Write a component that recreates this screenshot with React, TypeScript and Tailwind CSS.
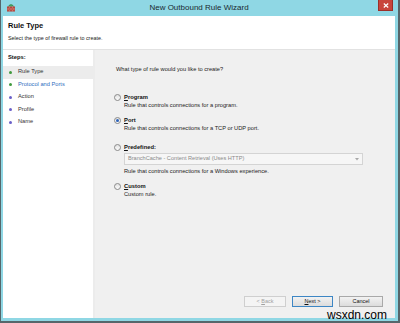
const font = { fontFamily: '"Liberation Sans", Arial, sans-serif' };

function Radio({ checked }: { checked?: boolean }) {
  return (
    <div className="w-[7px] h-[7px] rounded-full border border-[#8a8a8a] bg-gradient-to-b from-[#e2e2e2] to-[#fbfbfb] flex items-center justify-center shrink-0">
      {checked && <div className="w-[3px] h-[3px] rounded-full bg-[#2c62b8]" />}
    </div>
  );
}

function Option({
  label,
  desc,
  checked,
  className,
  children,
}: {
  label: React.ReactNode;
  desc: string;
  checked?: boolean;
  className?: string;
  children?: React.ReactNode;
}) {
  return (
    <div className={`flex gap-[3px] ${className ?? ''}`}>
      <div className="h-[8px] flex items-center">
        <Radio checked={checked} />
      </div>
      <div className="flex flex-col">
        <div className="h-[8px] leading-[8px] text-[5.8px] font-bold text-[#111]">{label}</div>
        {children}
        <div className="h-[8px] leading-[8px] text-[5.7px] text-[#222]">{desc}</div>
      </div>
    </div>
  );
}

const steps = [
  { name: 'Rule Type', done: true, active: true },
  { name: 'Protocol and Ports', done: true, link: true },
  { name: 'Action' },
  { name: 'Profile' },
  { name: 'Name' },
];

export default function App() {
  return (
    <div
      className="relative w-[400px] h-[323px] overflow-hidden bg-[#8fd7e4] border-l border-r-2 border-b-2 border-[#56666b] pl-[2px] pr-[3px] pb-[3px] flex flex-col"
      style={font}
    >
      {/* title bar */}
      <div className="relative h-[16px] shrink-0 flex items-center justify-center">
        <svg className="absolute left-[3px] top-[2px]" width="10" height="10" viewBox="0 0 10 10">
          <path d="M2.5 4.5 A2.6 2.6 0 0 1 7.5 4.5" fill="#49a860" stroke="#2d7a40" strokeWidth="0.6" />
          <rect x="1" y="4.5" width="8" height="5" fill="#b03a32" />
          <path d="M1 6.2 H9 M1 7.9 H9 M3.5 4.5 V6.2 M6.5 4.5 V6.2 M2.2 6.2 V7.9 M5 6.2 V7.9 M7.8 6.2 V7.9 M3.5 7.9 V9.5 M6.5 7.9 V9.5" stroke="#e9a79a" strokeWidth="0.4" />
        </svg>
        <span className="text-[8px] text-[#1a2a30] leading-none">New Outbound Rule Wizard</span>
        <div className="absolute right-[2px] top-0 w-[15px] h-[11px] bg-[#c8453c] border border-[#9c2f28] border-t-0 flex items-center justify-center">
          <svg width="6" height="5" viewBox="0 0 6 5">
            <path d="M0.8 0.5 L5.2 4.5 M5.2 0.5 L0.8 4.5" stroke="#ffffff" strokeWidth="1.2" />
          </svg>
        </div>
      </div>

      {/* body */}
      <div className="flex-1 flex flex-col bg-white">
        <div className="h-[34px] shrink-0 border-b border-[#e2e2e2] pl-[5px] pt-[5px]">
          <div className="text-[7.5px] font-bold text-[#111] leading-[9px]">Rule Type</div>
          <div className="mt-[5px] text-[5.4px] text-[#222] leading-[7px]">Select the type of firewall rule to create.</div>
        </div>

        <div className="flex-1 flex">
          {/* steps */}
          <div className="w-[92px] shrink-0 bg-white border-r-2 border-[#ececec] pt-[3px]">
            <div className="pl-[5px] text-[5.8px] font-bold text-[#111] leading-[8px]">Steps:</div>
            <div className="mt-[5px] flex flex-col">
              {steps.map((s) => (
                <div
                  key={s.name}
                  className={`h-[12.5px] flex items-center gap-[6px] pl-[6px] ${s.active ? 'bg-[#ececec]' : ''}`}
                >
                  <div className={`w-[3px] h-[3px] rounded-full ${s.done ? 'bg-[#3f9a3e]' : 'bg-[#6a5fc8]'}`} />
                  <span className={`text-[5.7px] leading-none ${s.link ? 'text-[#2f6ec0]' : 'text-[#333]'}`}>{s.name}</span>
                </div>
              ))}
            </div>
          </div>

          {/* content */}
          <div className="flex-1 bg-[#f0f0f0] flex flex-col pl-[19px] pr-[12px] pt-[15px] pb-[11px]">
            <div className="ml-[2px] h-[8px] leading-[8px] text-[5.7px] text-[#222]">What type of rule would you like to create?</div>

            <Option
              className="mt-[20px]"
              label={<><span className="underline">P</span>rogram</>}
              desc="Rule that controls connections for a program."
            />
            <Option
              className="mt-[7px]"
              checked
              label={<><span className="underline">P</span>ort</>}
              desc="Rule that controls connections for a TCP or UDP port."
            />
            <Option
              className="mt-[11px]"
              label={<><span className="underline">P</span>redefined:</>}
              desc="Rule that controls connections for a Windows experience."
            >
              <div className="mt-[2px] mb-[2px] w-[239px] h-[12px] border border-[#d4d4d4] bg-[#f6f6f6] flex items-center justify-between pl-[3px] pr-[3px]">
                <span className="text-[5.6px] text-[#8a8a8a] leading-none">BranchCache - Content Retrieval (Uses HTTP)</span>
                <svg width="4" height="3" viewBox="0 0 4 3">
                  <path d="M0 0 L4 0 L2 2.5 Z" fill="#a8a8a8" />
                </svg>
              </div>
            </Option>
            <Option
              className="mt-[7px]"
              label={<><span className="underline">C</span>ustom</>}
              desc="Custom rule."
            />

            <div className="mt-auto flex justify-end gap-[6px]">
              <button className="w-[42px] h-[11px] border border-[#cfcfcf] bg-[#f4f4f4] text-[5.5px] text-[#a0a0a0] leading-none">
                &lt; <span className="underline">B</span>ack
              </button>
              <button className="w-[41px] h-[11px] border border-[#3d86c4] bg-gradient-to-b from-[#f2f2f2] to-[#dcdcdc] text-[5.5px] text-[#111] leading-none">
                <span className="underline">N</span>ext &gt;
              </button>
              <button className="w-[44px] h-[11px] border border-[#a9a9a9] bg-gradient-to-b from-[#f2f2f2] to-[#dcdcdc] text-[5.5px] text-[#111] leading-none">
                Cancel
              </button>
            </div>
          </div>
        </div>
      </div>

      <div className="absolute right-[11px] bottom-[-1px] text-[12px] leading-[14px] text-black">wsxdn.com</div>
    </div>
  );
}
